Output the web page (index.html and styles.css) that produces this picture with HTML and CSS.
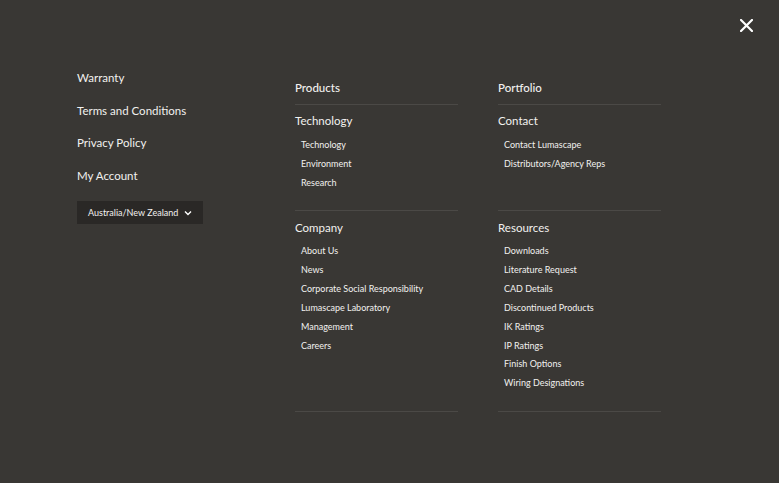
FILE: index.html
```html
<!DOCTYPE html>
<html lang="en">
<head>
    <meta charset="UTF-8">
    <meta name="viewport" content="width=device-width, initial-scale=1.0">
    <title>Menu</title>
    <link rel="stylesheet" href="styles.css">
</head>
<body>
    <button class="close" aria-label="Close">
        <svg width="13" height="13" viewBox="0 0 13 13"><path d="M1 1L12 12M12 1L1 12" stroke="#fff" stroke-width="2.2" stroke-linecap="square"/></svg>
    </button>
    <div class="menu">
        <div class="side">
            <a href="#">Warranty</a>
            <a href="#">Terms and Conditions</a>
            <a href="#">Privacy Policy</a>
            <a href="#">My Account</a>
            <div class="region">
                <span>Australia/New Zealand</span>
                <svg width="8" height="6" viewBox="0 0 8 6"><path d="M1 1.5L4 4.5L7 1.5" stroke="#fff" stroke-width="1.4" fill="none"/></svg>
            </div>
        </div>
        <div class="cols">
            <div class="block top"><h3>Products</h3></div>
            <div class="block top"><h3>Portfolio</h3></div>
            <div class="block">
                <h3>Technology</h3>
                <ul>
                    <li>Technology</li>
                    <li>Environment</li>
                    <li>Research</li>
                </ul>
            </div>
            <div class="block">
                <h3>Contact</h3>
                <ul>
                    <li>Contact Lumascape</li>
                    <li>Distributors/Agency Reps</li>
                </ul>
            </div>
            <div class="block low">
                <h3>Company</h3>
                <ul>
                    <li>About Us</li>
                    <li>News</li>
                    <li>Corporate Social Responsibility</li>
                    <li>Lumascape Laboratory</li>
                    <li>Management</li>
                    <li>Careers</li>
                </ul>
            </div>
            <div class="block low">
                <h3>Resources</h3>
                <ul>
                    <li>Downloads</li>
                    <li>Literature Request</li>
                    <li>CAD Details</li>
                    <li>Discontinued Products</li>
                    <li>IK Ratings</li>
                    <li>IP Ratings</li>
                    <li>Finish Options</li>
                    <li>Wiring Designations</li>
                </ul>
            </div>
        </div>
    </div>
</body>
</html>
```

FILE: styles.css
```css
body {
    margin: 0;
    background-color: #393734;
    color: #f2f1ef;
    font-family: 'Lato', 'Noto Sans', sans-serif;
    height: 483px;
    position: relative;
}
.close {
    position: absolute;
    top: 19px;
    right: 26px;
    background: none;
    border: none;
    padding: 0;
    cursor: pointer;
}
.close svg {
    display: block;
}
.menu {
    display: flex;
    padding: 69px 0 0 77px;
}
.side {
    width: 218px;
    display: flex;
    flex-direction: column;
    align-items: flex-start;
}
.side a {
    color: #f2f1ef;
    text-decoration: none;
    font-size: 11.5px;
    line-height: 18px;
    margin-bottom: 14.5px;
}
.region {
    margin-top: 2px;
    width: 126px;
    height: 23px;
    box-sizing: border-box;
    background-color: #2a2826;
    display: flex;
    align-items: center;
    justify-content: space-between;
    padding: 0 11px;
    font-size: 9px;
}
.cols {
    display: grid;
    grid-template-columns: 163px 163px;
    column-gap: 40px;
    margin-top: 10px;
}
.block {
    border-bottom: 1px solid #4b4946;
    padding-top: 7px;
    padding-bottom: 18px;
}
.block.top {
    padding-top: 0;
    padding-bottom: 7px;
}
.block.low {
    padding-top: 8px;
}
h3 {
    margin: 0;
    font-size: 11.5px;
    font-weight: 400;
    line-height: 18px;
}
.top h3 {
    font-weight: 500;
}
ul {
    list-style: none;
    margin: 5px 0 0;
    padding: 0 0 0 6px;
}
li {
    font-size: 9px;
    line-height: 19px;
}
.low li {
    line-height: 18.9px;
}
```
